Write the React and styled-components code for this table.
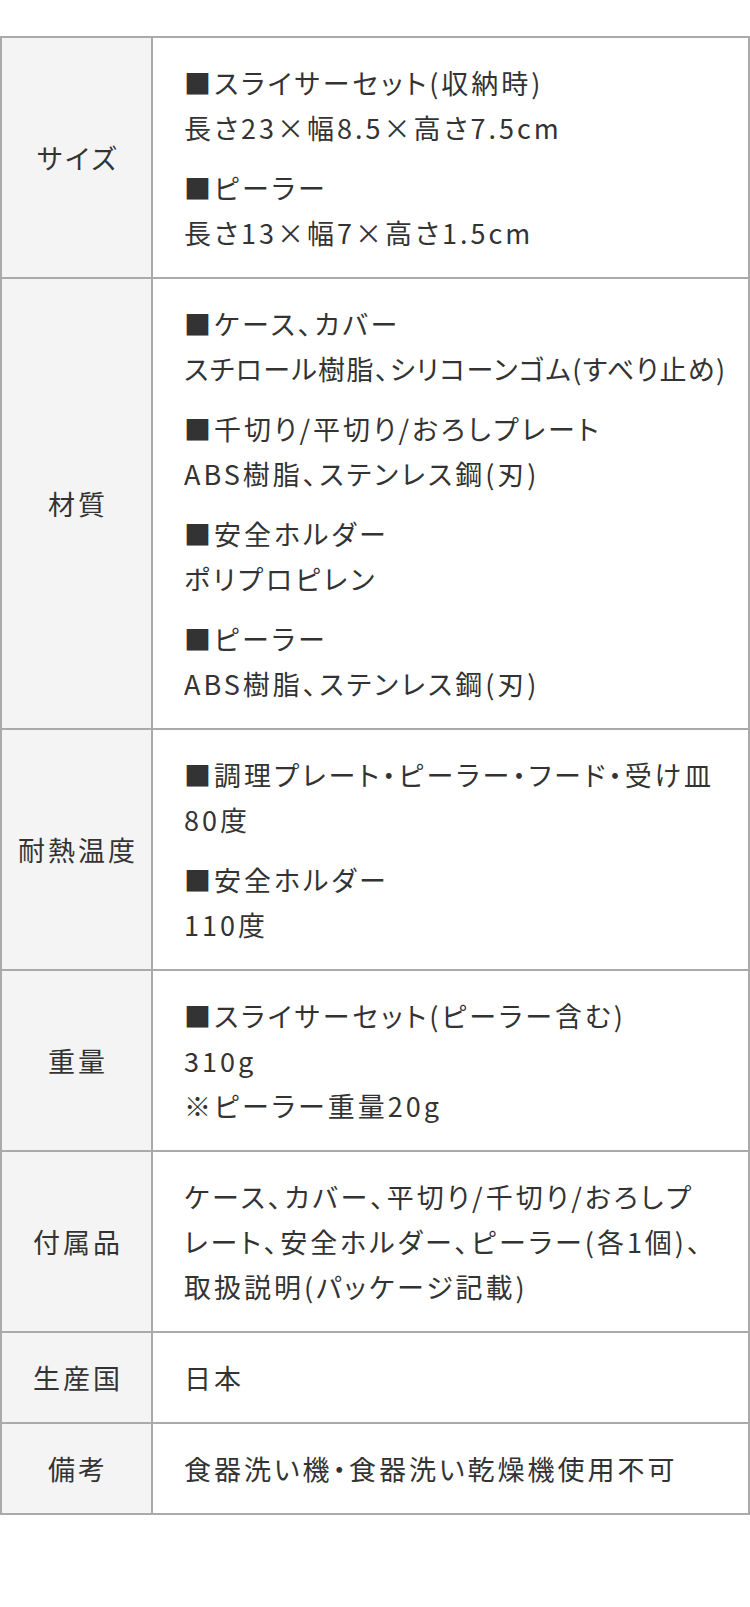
import * as React from "react";
import styled, { createGlobalStyle } from "styled-components";

const GlobalStyle = createGlobalStyle`
  html, body {
    margin: 0;
    padding: 0;
    background: #fff;
  }
  body {
    font-family: "Noto Sans CJK JP", "Noto Sans", sans-serif;
    color: #333;
  }
`;

const Page = styled.div`
  box-sizing: border-box;
  width: 750px;
  min-height: 1607px;
  padding-top: 36px;
  background: #fff;
`;

const SpecTable = styled.table`
  width: 750px;
  border-collapse: separate;
  border-spacing: 0;
  table-layout: fixed;
  border-top: 2px solid #aaa;
  border-left: 2px solid #aaa;
`;

const Head = styled.th`
  box-sizing: border-box;
  width: 151px;
  padding: 0 0 0 3px;
  background: #f4f4f4;
  border-right: 2px solid #aaa;
  border-bottom: 2px solid #aaa;
  font-weight: 400;
  font-size: 27px;
  letter-spacing: 3px;
  font-feature-settings: "palt";
  color: #333;
  text-align: center;
  vertical-align: middle;
`;

const Cell = styled.td`
  padding: 22px 6px 22px 31px;
  border-right: 2px solid #aaa;
  border-bottom: 2px solid #aaa;
  font-size: 27px;
  line-height: 45px;
  letter-spacing: 3px;
  font-feature-settings: "palt";
  color: #333;
  vertical-align: middle;
`;

const Block = styled.p`
  margin: 0;
  & + & {
    margin-top: 15px;
  }
`;

const Line = styled.span`
  display: block;
  white-space: nowrap;
  letter-spacing: ${(p) => (p.$tight ? "1.4px" : "3px")};
`;

const rows = [
  {
    label: "サイズ",
    blocks: [
      ["■スライサーセット(収納時)", "長さ23×幅8.5×高さ7.5cm"],
      ["■ピーラー", "長さ13×幅7×高さ1.5cm"],
    ],
  },
  {
    label: "材質",
    blocks: [
      ["■ケース、カバー", { text: "スチロール樹脂、シリコーンゴム(すべり止め)", tight: true }],
      ["■千切り/平切り/おろしプレート", "ABS樹脂、ステンレス鋼(刃)"],
      ["■安全ホルダー", "ポリプロピレン"],
      ["■ピーラー", "ABS樹脂、ステンレス鋼(刃)"],
    ],
  },
  {
    label: "耐熱温度",
    blocks: [
      ["■調理プレート・ピーラー・フード・受け皿", "80度"],
      ["■安全ホルダー", "110度"],
    ],
  },
  {
    label: "重量",
    blocks: [["■スライサーセット(ピーラー含む)", "310g", "※ピーラー重量20g"]],
  },
  {
    label: "付属品",
    blocks: [
      [
        "ケース、カバー、平切り/千切り/おろしプ",
        "レート、安全ホルダー、ピーラー(各1個)、",
        "取扱説明(パッケージ記載)",
      ],
    ],
  },
  { label: "生産国", blocks: [["日本"]] },
  { label: "備考", blocks: [["食器洗い機・食器洗い乾燥機使用不可"]] },
];

export default function App() {
  return (
    <Page>
      <GlobalStyle />
      <SpecTable>
        <tbody>
          {rows.map((row) => (
            <tr key={row.label}>
              <Head>{row.label}</Head>
              <Cell>
                {row.blocks.map((lines, i) => (
                  <Block key={i}>
                    {lines.map((line, j) =>
                      typeof line === "string" ? (
                        <Line key={j}>{line}</Line>
                      ) : (
                        <Line key={j} $tight={line.tight}>
                          {line.text}
                        </Line>
                      )
                    )}
                  </Block>
                ))}
              </Cell>
            </tr>
          ))}
        </tbody>
      </SpecTable>
    </Page>
  );
}
